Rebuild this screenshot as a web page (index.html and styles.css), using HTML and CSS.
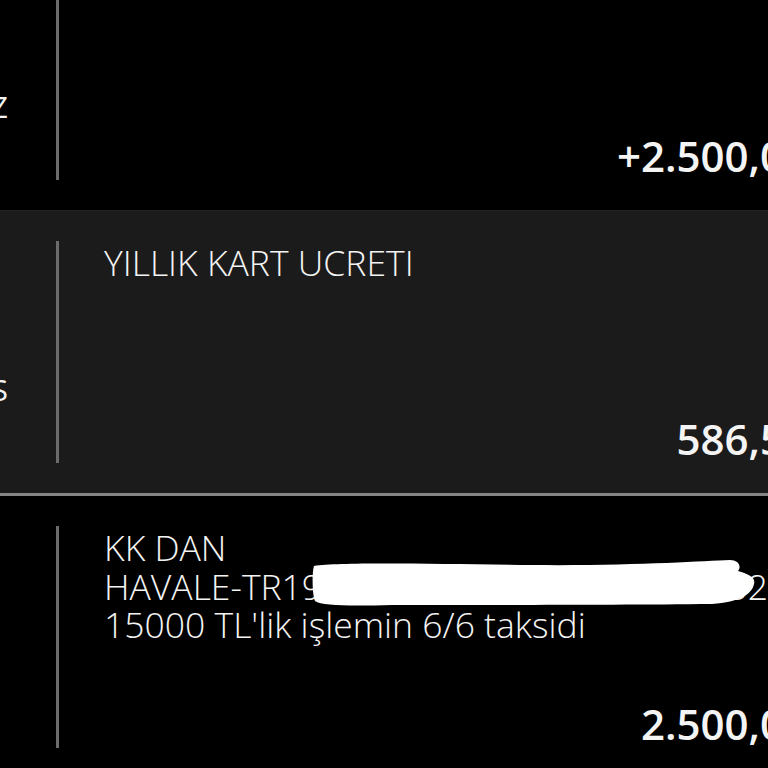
FILE: index.html
```html
<!DOCTYPE html>
<html lang="tr">
<head>
<meta charset="utf-8">
<title>Hesap hareketleri</title>
<link rel="stylesheet" href="styles.css">
</head>
<body>
<div class="list">
  <div class="row">
    <div class="date">TEMMUZ</div>
    <div class="rule"></div>
    <div class="content">
      <div class="desc">GELEN HAVALE</div>
      <div class="amount">+2.500,00</div>
    </div>
  </div>
  <div class="row row-alt">
    <div class="date">AĞUSTOS</div>
    <div class="rule"></div>
    <div class="content">
      <div class="desc">YILLIK KART UCRETI</div>
      <div class="amount">586,50</div>
    </div>
  </div>
  <div class="row">
    <div class="date date-inset">EYLÜL</div>
    <div class="rule"></div>
    <div class="content">
      <div class="desc">
        <div>KK DAN</div>
        <div class="masked">HAVALE-TR190001200010000000000032<svg class="scribble" viewBox="0 0 445 50" width="445" height="50"><path d="M2 8 C30 4 120 6 220 7 C320 8 390 3 418 2 C426 2 430 8 426 13 C436 16 444 19 442 26 C440 36 428 44 400 46 C300 47 160 47 80 47 C40 48 10 48 3 43 C0 36 0 14 2 8 Z" fill="#ffffff"/></svg></div>
        <div>15000 TL'lik işlemin 6/6 taksidi</div>
      </div>
      <div class="amount">2.500,00</div>
    </div>
  </div>
</div>
</body>
</html>
```

FILE: styles.css
```css
html, body {
  margin: 0;
  padding: 0;
  background: #000;
  width: 768px;
  height: 768px;
  overflow: hidden;
}

body {
  font-family: "Open Sans", "Noto Sans", sans-serif;
  color: #f4f4f4;
}

.list {
  width: 1000px;
  margin-left: -150px;
  margin-top: -72px;
}

.row {
  display: flex;
  align-items: stretch;
  padding: 30px 0;
  background: #000;
}

.row-alt {
  background: #1b1b1b;
  border-top: 1px solid #222;
  border-bottom: 3px solid #858585;
}

.date {
  width: 158px;
  flex: none;
  text-align: right;
  align-self: flex-end;
  padding-bottom: 58px;
  font-size: 30px;
  font-weight: 400;
  line-height: 30px;
  white-space: nowrap;
}

.date-inset {
  padding-right: 24px;
  width: 134px;
}

.rule {
  flex: none;
  width: 3px;
  margin-left: 48px;
  background: #6c6c6c;
}

.content {
  flex: 1;
  min-width: 0;
  min-height: 222px;
  margin-left: 45px;
  padding-right: 42px;
  display: flex;
  flex-direction: column;
  justify-content: space-between;
}

.desc {
  padding-top: 2px;
  font-size: 35.5px;
  font-weight: 300;
  line-height: 38.5px;
  white-space: nowrap;
}

.masked {
  position: relative;
}

.scribble {
  position: absolute;
  left: 208px;
  top: -9px;
}

.amount {
  text-align: right;
  font-size: 42px;
  font-weight: 600;
  line-height: 48px;
  white-space: nowrap;
}
```
